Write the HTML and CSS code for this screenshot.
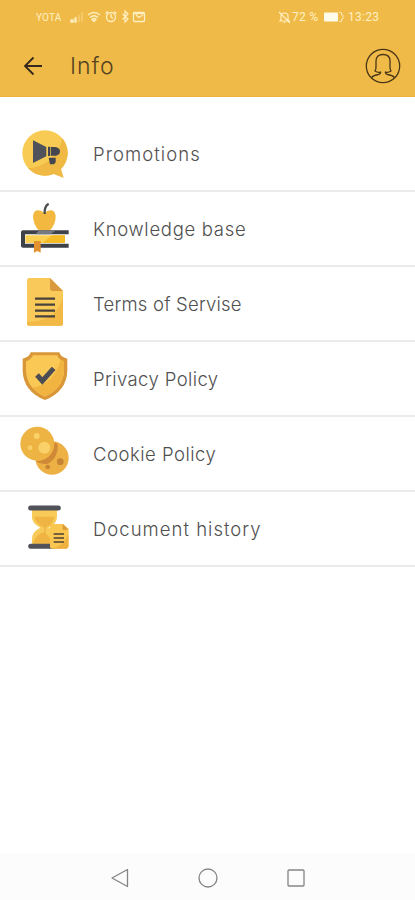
FILE: index.html
```html
<!DOCTYPE html>
<html lang="en">
<head>
<meta charset="utf-8">
<title>Info</title>
<link rel="stylesheet" href="styles.css">
</head>
<body>
<div class="screen">
  <header class="header">
    <div class="status">
      <span class="carrier">YOTA</span>
      <svg class="status-icons" width="78" height="16" viewBox="0 0 78 16" fill="none" stroke="currentColor" stroke-width="1.3">
        <path d="M1 13V11h2v2zM5 13V9h1v4z" fill="currentColor"/><path d="M9 13V6M12 13V3" opacity=".4"/>
        <path d="M18 6q6-5 12 0M20 8.500q4-3.500 8 0M22 10.500q2-2 4 0l-2 2z"/>
        <circle cx="41" cy="8" r="4.500"/><path d="M41 5v3l2 1.500M35.500 4.500l2.500-2M46.500 4.500l-2.500-2"/>
        <path d="M52.500 5l5.500 5-3 3V2l3 3-5.500 5.500" stroke-width="1.200"/>
        <rect x="63.500" y="3.500" width="11" height="9" rx="1"/><path d="M64 4.500h10M66 6l3 2.500L73 6"/>
      </svg>
      <svg class="bell" width="13" height="14" viewBox="0 0 13 14" fill="none" stroke="currentColor" stroke-width="1.200"><path d="M3 10V6q0-3 3.500-3T10 6v4l1 1H2zM1 2l11 11M5.500 12.500h2"/></svg>
      <span class="percent">72 %</span>
      <svg class="battery" width="22" height="12" viewBox="0 0 22 12"><rect width="14" height="9" y="1.500" rx="1" fill="currentColor"/><path d="M15 1.500h2.500v2.500H19v4h-1.500v2.500H15" fill="none" stroke="currentColor" opacity=".65"/></svg>
      <span class="clock">13:23</span>
    </div>
    <div class="toolbar">
      <svg class="back" width="20" height="20" viewBox="0 0 20 20" fill="none" stroke="currentColor" stroke-width="1.800"><path d="M19 10H2M10.500 1.500L2 10l8.500 8.500"/></svg>
      <h1>Info</h1>
      <svg class="profile" width="36" height="36" viewBox="0 0 36 36" fill="none" stroke="currentColor" stroke-width="1.300"><circle cx="18" cy="18" r="16.700"/><path d="M6.500 29.500q2-2.300 7-3 2.500-.7 2-2.500-2.500 1-5.500-1 1.200-2 1-5V13q0-6.500 7-6.500T25 13v5q-.2 3 1 5-3 2-5.500 1-.5 1.800 2 2.500 5 .7 7 3"/></svg>
    </div>
  </header>

  <main class="list">
    <a class="row">
      <svg class="icon" viewBox="0 0 210 219"><g transform="translate(0 9)">
        <circle cx="105" cy="99" r="68" fill="#f8cc54"/>
        <path d="M157 55a68 68 0 0 1-4 92l8 27-30-12A68 68 0 0 1 54 144C94 145 145 115 157 55z" fill="#efb944"/>
        <path d="M69 61l40 20v28l-40 20z" fill="#50525b"/><path d="M114 80h7v28h-7zM123 81h12q15 2 15 13t-12 13h-15zM116 113h21v14l-5 6h-12z" fill="#444650"/>
      </g></svg>
      <span class="label l1">Promotions</span>
    </a>
    <a class="row">
      <svg class="icon" viewBox="0 0 210 219"><g transform="translate(0 9)">
        <path d="M103 53q-29-18-34 9 0 26 19 46h30q20-21 19-46-5-27-34-9z" fill="#f2b83f"/>
        <path d="M104 57q-2-23 12-31" fill="none" stroke="#4b4d50" stroke-width="7"/>
        <path d="M46 121h119v23H46z" fill="#fbd052"/><path d="M125 121h40v23H98z" fill="#f4bb27"/>
        <path d="M176 112H39v40h137" fill="none" stroke="#3f4148" stroke-width="12" stroke-linejoin="round"/>
        <path d="M88 106h50l-16 12H76z" fill="#777980"/>
        <path d="M72 138h20v35l-10-5-10 5z" fill="#e4912f"/>
      </g></svg>
      <span class="label l2">Knowledge base</span>
    </a>
    <a class="row">
      <svg class="icon" viewBox="0 0 210 219"><g transform="translate(0 3)">
        <path d="M58 30h62l39 39v98q0 6-6 6H57q-6 0-6-6V37q0-7 7-7z" fill="#f9ca59"/>
        <path d="M159 88v79q0 6-6 6H57q-6 0-6-6v-5q86 0 108-74z" fill="#f2b947"/><path d="M120 30l39 39h-31q-8 0-8-8z" fill="#d99a3e"/>
        <path d="M75 92h60M75 110h60M75 128h60M75 145h60" stroke="#47423a" stroke-width="7"/>
      </g></svg>
      <span class="label l3">Terms of Servise</span>
    </a>
    <a class="row">
      <svg class="icon" viewBox="0 0 210 219">
        <path d="M62 31h86q3 14 24 19v36q-2 62-67 88-65-26-67-88V50q21-5 24-19z" fill="#d99739"/>
        <path d="M69 40h72q6 14 21 18v30q-3 52-57 76-54-24-57-76V58q15-4 21-18z" fill="#fac955"/>
        <path d="M162 58v30q-3 52-57 76-23-10-38-27 64-10 85-84z" fill="#f1b440"/>
        <path d="M81 99l16 18 34-38" fill="none" stroke="#4b4d53" stroke-width="15"/>
      </svg>
      <span class="label l4">Privacy Policy</span>
    </a>
    <a class="row">
      <svg class="icon" viewBox="0 0 210 219"><g transform="translate(0 2)">
        <circle cx="126" cy="121" r="50" fill="#edb044"/><path d="M132 74a51 51 0 0 1-56 56q16 11 38 8a57 57 0 0 0 28-60z" fill="#cf8937"/>
        <circle cx="82" cy="78" r="51" fill="#eeb443"/>
        <g fill="#fad168"><circle cx="103" cy="90" r="18"/><circle cx="80" cy="55" r="9"/><circle cx="60" cy="90" r="7"/></g>
        <circle cx="151" cy="132" r="10" fill="#c78435"/><circle cx="113" cy="148" r="7" fill="#c78435"/>
      </g></svg>
      <span class="label l5">Cookie Policy</span>
    </a>
    <a class="row">
      <svg class="icon" viewBox="0 0 210 219"><g transform="translate(0 9)">
        <path d="M66 44h75v22q0 20-25 32 25 12 25 50H66v-16q0-22 25-34-25-12-25-31z" fill="#f8cb59"/>
        <path d="M73 65h60q-3 22-28 34-28-12-32-34z" fill="#efb441"/><path d="M105 85v25" stroke="#efb441" stroke-width="5"/><path d="M70 146q5-28 34-36l30 36z" fill="#efb441"/>
        <path d="M62 39h83M62 154h67" stroke="#505159" stroke-width="15" stroke-linecap="round"/>
        <path d="M126 87h34l16 15v52q0 7-7 7h-43q-6 0-6-7V93q0-6 6-6z" fill="#f9c650"/><path d="M175 118v36q0 7-7 7h-45q42-8 52-43z" fill="#efb042"/><path d="M158 87l17 17h-17z" fill="#db9739"/>
        <path d="M131 117h31M131 129h31M131 141h31" stroke="#4d4235" stroke-width="5"/>
      </g></svg>
      <span class="label l6">Document history</span>
    </a>
  </main>

  <nav class="navbar">
    <svg width="20" height="20" viewBox="0 0 20 20"><path d="M17.500 1.500v17L2 10z"/></svg>
    <svg width="20" height="20" viewBox="0 0 20 20"><circle cx="10" cy="10" r="9"/></svg>
    <svg width="20" height="20" viewBox="0 0 20 20"><rect x="2" y="2" width="16" height="16" rx="1"/></svg>
  </nav>
</div>
</body>
</html>
```
FILE: styles.css
```css
* { box-sizing: border-box; }
body { margin: 0; background: #fff; font-family: Inter, "Open Sans", sans-serif; }
.screen { display: flex; flex-direction: column; height: 900px; }
.header { height: 97px; background: #efba48; border-bottom: 1px solid #ebb23f; flex: none; }
.status { display: flex; align-items: center; height: 34px; padding: 0 34px 0 36px; color: #fff0c2; font: 12px Roboto, sans-serif; }
.carrier { font-size: 10px; width: 34px; letter-spacing: .2px; }
.bell { margin-left: auto; }
.percent { margin-left: 1px; width: 32px; white-space: nowrap; letter-spacing: .3px; }
.battery { color: #fffbea; }
.clock { margin-left: 2px; width: 33px; letter-spacing: .3px; }
.toolbar { display: flex; align-items: center; height: 63px; padding: 0 14px 0 23px; color: #55431f; }
h1 { margin: 0 auto 0 27px; font-size: 23px; font-weight: 300; line-height: 30px; letter-spacing: 1px; }
.back { color: #35291b; }
.profile { color: #493717; }
.list { padding-top: 20px; flex: 1; }
.row { display: flex; align-items: center; height: 75px; padding-left: 10px; border-bottom: 2px solid #ebebeb; }
.icon { width: 70px; height: 73px; flex: none; }
.label { margin-left: 13px; font-size: 18.500px; font-weight: 300; line-height: 24px; color: #505050; white-space: nowrap; }
.l1 { letter-spacing: 1.050px; }
.l2 { letter-spacing: .7px; }
.l3 { letter-spacing: .2px; }
.l4 { letter-spacing: .4px; }
.l5 { letter-spacing: .5px; }
.l6 { letter-spacing: 1.020px; }
.navbar { display: flex; justify-content: center; align-items: center; gap: 68px; height: 46px; padding-top: 1px; background: #fcfcfc; flex: none; }
.navbar svg { fill: none; stroke: #858585; stroke-width: 1.300; stroke-linejoin: round; }
```
